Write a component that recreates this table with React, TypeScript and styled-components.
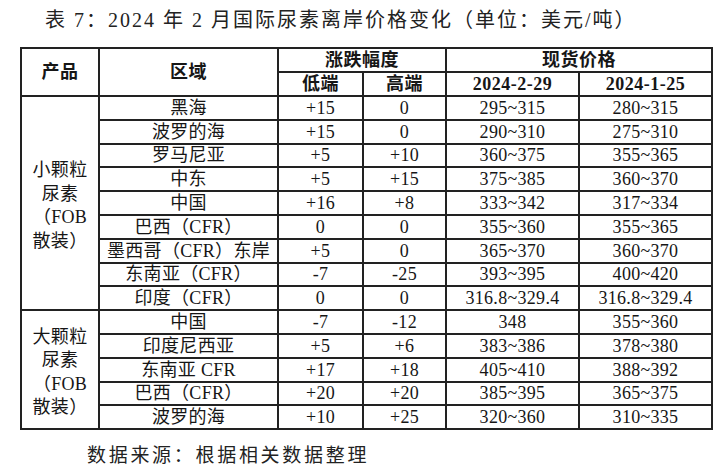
import React from "react";
import styled, { createGlobalStyle } from "styled-components";

const Global = createGlobalStyle`
  html, body { margin: 0; padding: 0; background: #ffffff; }
  body { font-family: "Liberation Serif", "Noto Sans CJK SC", serif; color: #161616; }
`;

const Page = styled.div`
  width: 727px;
  height: 468px;
  box-sizing: border-box;
  padding-top: 8px;
  overflow: hidden;
`;

const Title = styled.div`
  margin-left: 45px;
  font-size: 20px;
  line-height: 24px;
  letter-spacing: 2px;
  color: #222;
  white-space: pre;
`;

const Table = styled.table`
  margin-top: 15px;
  margin-left: 20px;
  border-collapse: collapse;
  table-layout: fixed;
  width: 691px;
  border: 2px solid #222;
`;

const HeadRow = styled.tr`
  height: 24px;
`;

const BodyRow = styled.tr`
  height: 23.8px;
`;

const Th = styled.th`
  border: 2px solid #222;
  padding: 0;
  font-size: 18px;
  font-weight: 700;
  line-height: 20px;
  text-align: center;
  vertical-align: middle;
  letter-spacing: 0.5px;
`;

const Td = styled.td`
  border: 2px solid #222;
  padding: 0;
  font-size: 18px;
  font-weight: 400;
  line-height: 20px;
  text-align: center;
  vertical-align: middle;
  white-space: nowrap;
  letter-spacing: 0.3px;
`;

const GroupTd = styled(Td)`
  line-height: 23.5px;
  padding-top: 6px;
  white-space: normal;
`;

const Source = styled.div`
  margin-top: 14px;
  margin-left: 87px;
  font-size: 19px;
  line-height: 24px;
  letter-spacing: 2.7px;
  color: #222;
`;

type Row = [string, string, string, string, string];

const small: Row[] = [
  ["黑海", "+15", "0", "295~315", "280~315"],
  ["波罗的海", "+15", "0", "290~310", "275~310"],
  ["罗马尼亚", "+5", "+10", "360~375", "355~365"],
  ["中东", "+5", "+15", "375~385", "360~370"],
  ["中国", "+16", "+8", "333~342", "317~334"],
  ["巴西（CFR）", "0", "0", "355~360", "355~365"],
  ["墨西哥（CFR）东岸", "+5", "0", "365~370", "360~370"],
  ["东南亚（CFR）", "-7", "-25", "393~395", "400~420"],
  ["印度（CFR）", "0", "0", "316.8~329.4", "316.8~329.4"],
];

const large: Row[] = [
  ["中国", "-7", "-12", "348", "355~360"],
  ["印度尼西亚", "+5", "+6", "383~386", "378~380"],
  ["东南亚 CFR", "+17", "+18", "405~410", "388~392"],
  ["巴西（CFR）", "+20", "+20", "385~395", "365~375"],
  ["波罗的海", "+10", "+25", "320~360", "310~335"],
];

const Group = ({ name, rows }: { name: string; rows: Row[] }) => (
  <>
    {rows.map((r, i) => (
      <BodyRow key={i}>
        {i === 0 && (
          <GroupTd rowSpan={rows.length}>
            {name}
            <br />
            尿素
            <br />
            （FOB
            <br />
            散装）
          </GroupTd>
        )}
        {r.map((c, j) => (
          <Td key={j}>{c}</Td>
        ))}
      </BodyRow>
    ))}
  </>
);

export default function App() {
  return (
    <Page>
      <Global />
      <Title>表 7：2024 年 2 月国际尿素离岸价格变化（单位：美元/吨）</Title>
      <Table>
        <colgroup>
          <col style={{ width: 78 }} />
          <col style={{ width: 179 }} />
          <col style={{ width: 85 }} />
          <col style={{ width: 83 }} />
          <col style={{ width: 133 }} />
          <col style={{ width: 133 }} />
        </colgroup>
        <thead>
          <HeadRow>
            <Th rowSpan={2}>产品</Th>
            <Th rowSpan={2}>区域</Th>
            <Th colSpan={2}>涨跌幅度</Th>
            <Th colSpan={2}>现货价格</Th>
          </HeadRow>
          <HeadRow>
            <Th>低端</Th>
            <Th>高端</Th>
            <Th>2024-2-29</Th>
            <Th>2024-1-25</Th>
          </HeadRow>
        </thead>
        <tbody>
          <Group name="小颗粒" rows={small} />
          <Group name="大颗粒" rows={large} />
        </tbody>
      </Table>
      <Source>数据来源：根据相关数据整理</Source>
    </Page>
  );
}
